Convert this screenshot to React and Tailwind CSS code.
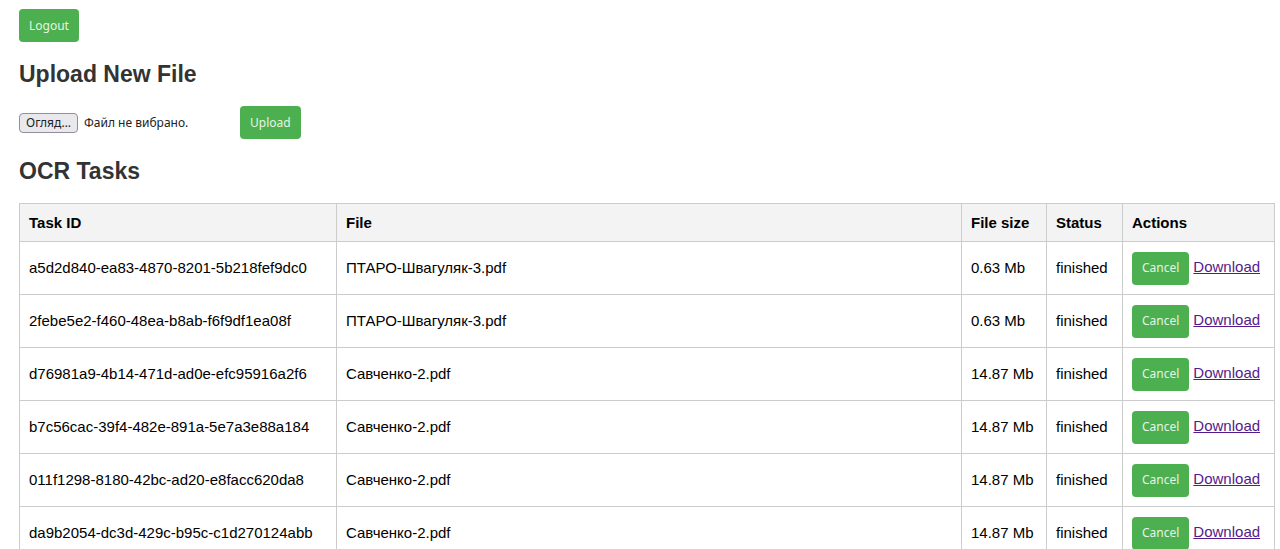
import React, { useState } from "react";

const tasks = [
  { id: "a5d2d840-ea83-4870-8201-5b218fef9dc0", file: "ПТАРО-Швагуляк-3.pdf", size: "0.63 Mb" },
  { id: "2febe5e2-f460-48ea-b8ab-f6f9df1ea08f", file: "ПТАРО-Швагуляк-3.pdf", size: "0.63 Mb" },
  { id: "d76981a9-4b14-471d-ad0e-efc95916a2f6", file: "Савченко-2.pdf", size: "14.87 Mb" },
  { id: "b7c56cac-39f4-482e-891a-5e7a3e88a184", file: "Савченко-2.pdf", size: "14.87 Mb" },
  { id: "011f1298-8180-42bc-ad20-e8facc620da8", file: "Савченко-2.pdf", size: "14.87 Mb" },
  { id: "da9b2054-dc3d-429c-b95c-c1d270124abb", file: "Савченко-2.pdf", size: "14.87 Mb" },
];

function Button({ type = "button", children }) {
  return (
    <button
      type={type}
      className="h-[33px] shrink-0 cursor-pointer rounded bg-[#4caf50] px-[10px] font-['Noto_Sans',sans-serif] text-xs text-[#e6f5e6] hover:bg-[#45a049]"
    >
      {children}
    </button>
  );
}

function Heading({ children }) {
  return <h2 className="text-[23px] leading-7 font-bold text-[#333333]">{children}</h2>;
}

function FilePicker() {
  const [name, setName] = useState("");
  return (
    <label className="relative flex w-[221px] items-center gap-[6px] font-['Noto_Sans',sans-serif] text-xs text-[#222222]">
      <input
        type="file"
        className="peer sr-only"
        onChange={(e) => setName(e.target.files[0]?.name ?? "")}
      />
      <span className="flex h-5 shrink-0 items-center rounded border border-[#8f8f9d] bg-[#e9e9ed] px-[6px] peer-focus-visible:outline-2">
        Огляд…
      </span>
      <span className="truncate">{name || "Файл не вибрано."}</span>
    </label>
  );
}

const cell = "border border-[#cccccc] px-[9px]";

export default function App() {
  return (
    <main className="min-h-screen bg-white pt-[9px] pr-[5px] pl-[19px] font-['Liberation_Sans',Arial,sans-serif] text-[15px] leading-[18px] text-black">
      <div className="mb-[18px] flex">
        <Button>Logout</Button>
      </div>

      <Heading>Upload New File</Heading>
      <form className="my-[18px] flex items-center" onSubmit={(e) => e.preventDefault()}>
        <FilePicker />
        <Button type="submit">Upload</Button>
      </form>

      <Heading>OCR Tasks</Heading>
      <table className="mt-[18px] w-full table-fixed border-collapse text-left">
        <colgroup>
          <col className="w-[317px]" />
          <col />
          <col className="w-[85px]" />
          <col className="w-[76px]" />
          <col className="w-[152px]" />
        </colgroup>
        <thead>
          <tr className="h-[38px] bg-[#f3f3f3]">
            <th className={cell}>Task ID</th>
            <th className={cell}>File</th>
            <th className={cell}>File size</th>
            <th className={cell}>Status</th>
            <th className={cell}>Actions</th>
          </tr>
        </thead>
        <tbody>
          {tasks.map((task) => (
            <tr key={task.id} className="h-[53px]">
              <td className={cell}>{task.id}</td>
              <td className={cell}>{task.file}</td>
              <td className={cell}>{task.size}</td>
              <td className={cell}>finished</td>
              <td className={cell}>
                <div className="flex items-baseline gap-1">
                  <Button>Cancel</Button>
                  <a href={`/download/${task.id}`} className="text-[#551a8b] underline">
                    Download
                  </a>
                </div>
              </td>
            </tr>
          ))}
        </tbody>
      </table>
    </main>
  );
}
